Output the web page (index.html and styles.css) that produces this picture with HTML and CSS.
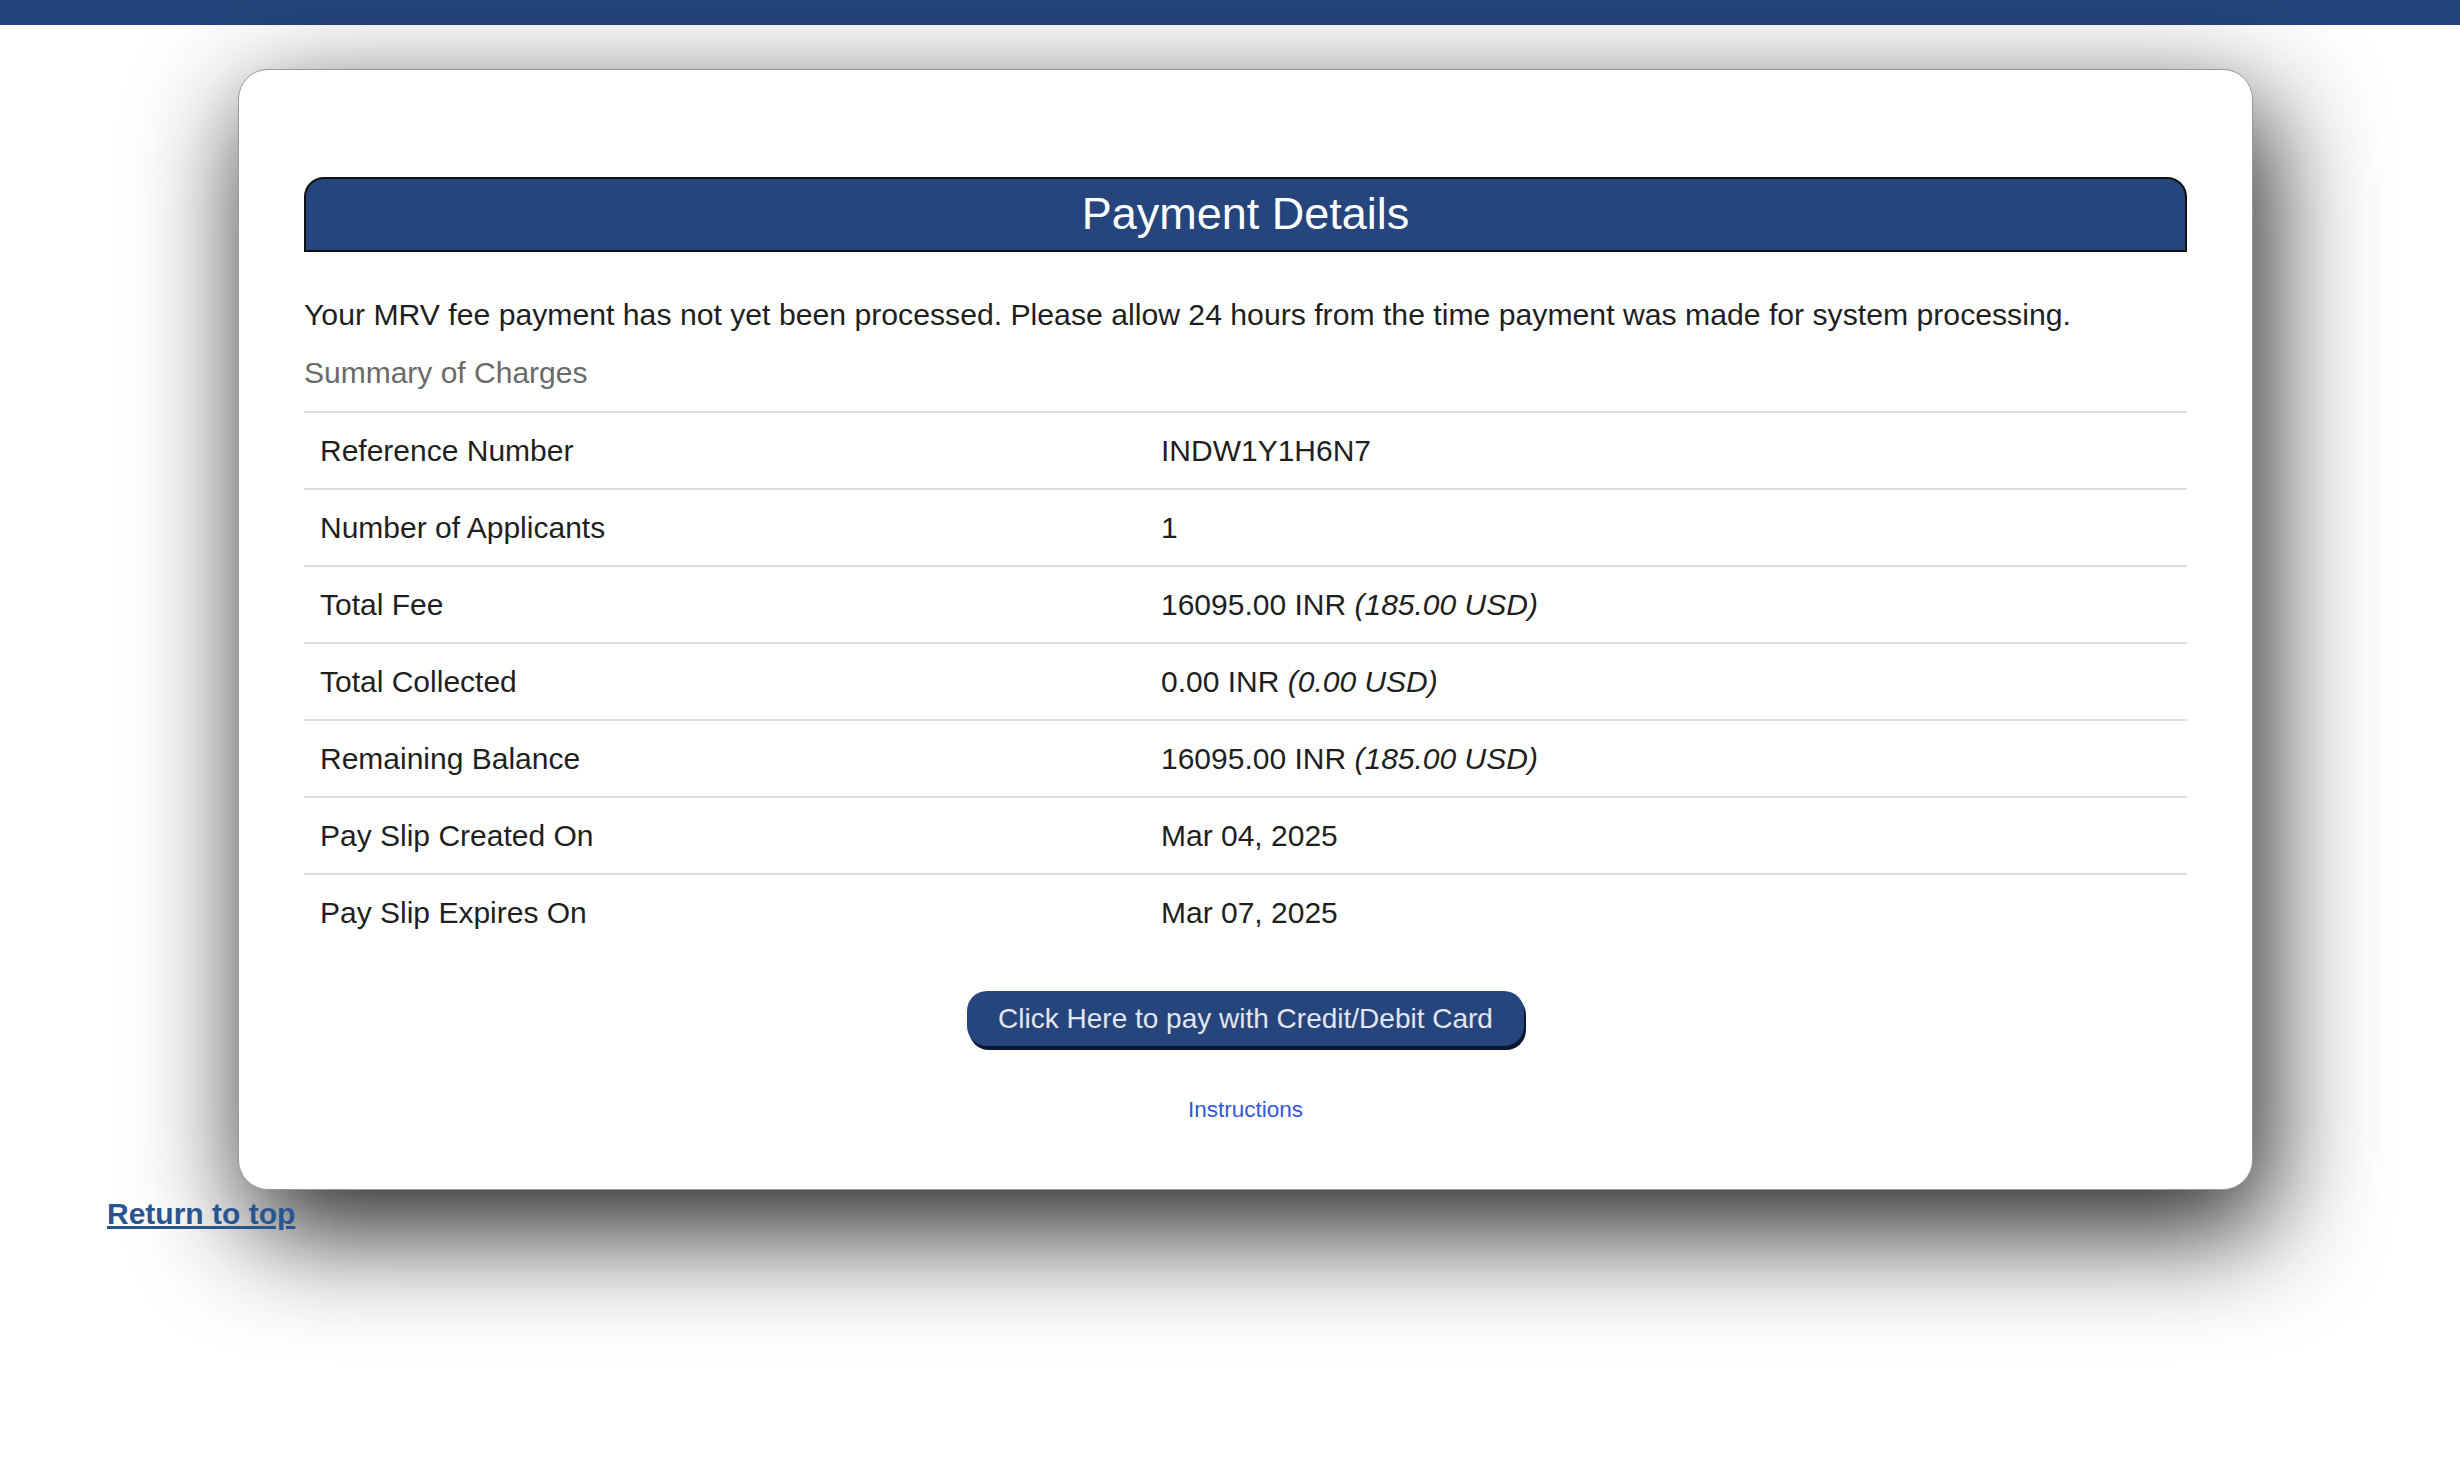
FILE: index.html
```html
<!DOCTYPE html>
<html lang="en">
<head>
<meta charset="utf-8">
<title>Payment Details</title>
<link rel="stylesheet" href="styles.css">
</head>
<body>
<div class="topbar"></div>
<div class="page">
  <div class="card">
    <h2 class="card-title">Payment Details</h2>
    <p class="notice">Your MRV fee payment has not yet been processed. Please allow 24 hours from the time payment was made for system processing.</p>
    <div class="summary-label">Summary of Charges</div>
    <table class="charges">
      <tr><td class="label">Reference Number</td><td>INDW1Y1H6N7</td></tr>
      <tr><td class="label">Number of Applicants</td><td>1</td></tr>
      <tr><td class="label">Total Fee</td><td>16095.00 INR <em>(185.00 USD)</em></td></tr>
      <tr><td class="label">Total Collected</td><td>0.00 INR <em>(0.00 USD)</em></td></tr>
      <tr><td class="label">Remaining Balance</td><td>16095.00 INR <em>(185.00 USD)</em></td></tr>
      <tr><td class="label">Pay Slip Created On</td><td>Mar 04, 2025</td></tr>
      <tr><td class="label">Pay Slip Expires On</td><td>Mar 07, 2025</td></tr>
    </table>
    <div class="actions">
      <button class="pay-btn" type="button">Click Here to pay with Credit/Debit Card</button>
      <a class="instructions" href="#">Instructions</a>
    </div>
  </div>
  <a class="return-top" href="#">Return to top</a>
</div>
</body>
</html>
```

FILE: styles.css
```css
html, body {
  margin: 0;
  padding: 0;
  background: #ffffff;
}

body {
  min-height: 1462px;
  font-family: "Liberation Sans", Arial, Helvetica, sans-serif;
  color: #1f1f1f;
}

.topbar {
  height: 25px;
  background: #24447b;
}

.page {
  padding: 44px 0 0 107px;
}

.card {
  box-sizing: border-box;
  width: 2015px;
  margin-left: 131px;
  background: #ffffff;
  border: 1px solid #9a9a9a;
  border-radius: 30px;
  padding: 107px 65px 66px 65px;
  box-shadow: 12px 38px 110px 4px rgba(0, 0, 0, 0.85);
}

.card-title {
  margin: 0;
  box-sizing: border-box;
  height: 75px;
  line-height: 70px;
  background: #25457c;
  border: 2px solid #111111;
  border-radius: 20px 20px 0 0;
  color: #ffffff;
  font-size: 45px;
  font-weight: normal;
  text-align: center;
}

.notice {
  margin: 45px 0 0 0;
  font-size: 30.2px;
  line-height: 36px;
}

.summary-label {
  margin-top: 22px;
  font-size: 30px;
  line-height: 36px;
  color: #6a6a6a;
}

.charges {
  margin-top: 20px;
  width: 100%;
  border-collapse: collapse;
  font-size: 30px;
}

.charges td {
  height: 75px;
  padding: 0 16px;
  border-top: 2px solid #dcdcdc;
  vertical-align: middle;
}

.charges td.label {
  width: 809px;
}

.charges em {
  font-style: italic;
}

.actions {
  display: flex;
  flex-direction: column;
  align-items: center;
  margin-top: 41px;
}

.pay-btn {
  height: 55px;
  padding: 0 31px;
  background: #25457c;
  color: #e2e6ee;
  border: none;
  border-radius: 20px;
  font-family: "Liberation Sans", Arial, Helvetica, sans-serif;
  font-size: 28px;
  box-shadow: 2px 4px 0 #0b1630;
  cursor: pointer;
}

.instructions {
  margin-top: 51px;
  font-size: 22.5px;
  line-height: 26px;
  color: #3656de;
  text-decoration: none;
}

.return-top {
  display: inline-block;
  margin-top: 6px;
  font-size: 30px;
  line-height: 36px;
  font-weight: bold;
  color: #28548f;
  text-decoration: underline;
}
```
